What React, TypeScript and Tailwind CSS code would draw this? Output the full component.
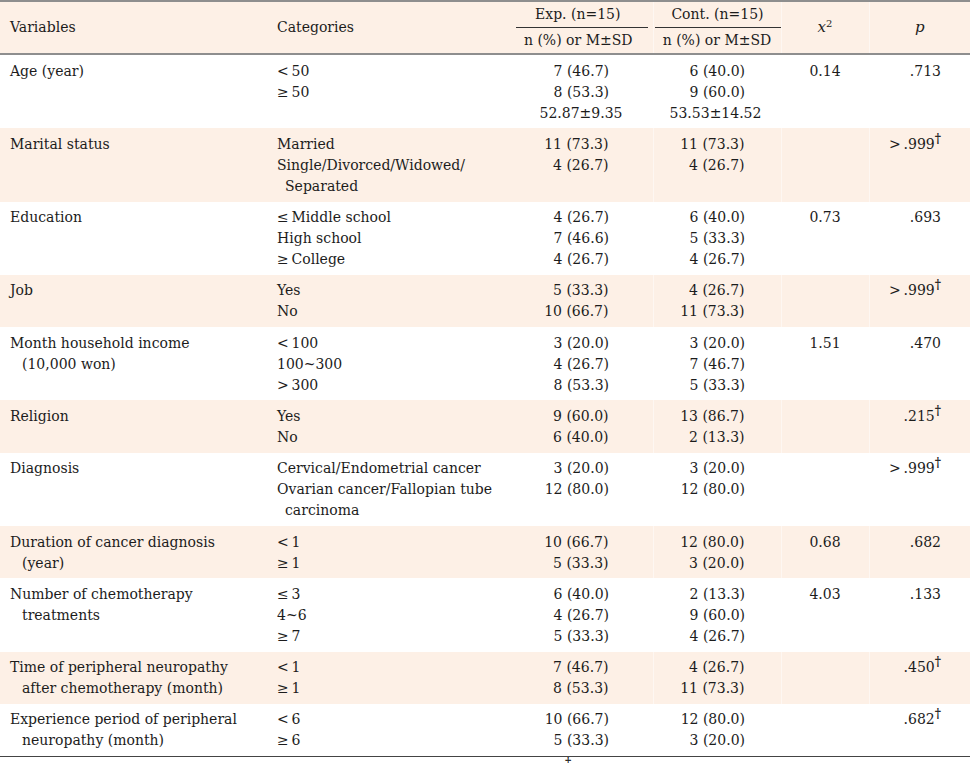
type Row = {
  v: string[];
  c: string[];
  e: string[];
  k: string[];
  x?: string;
  p?: string;
  dag?: boolean;
  shade?: boolean;
};

const T = "\u2009";

const rows: Row[] = [
  {
    v: ["Age (year)"],
    c: [`<${T}50`, `≥${T}50`],
    e: ["7 (46.7)", "8 (53.3)", "52.87±9.35"],
    k: ["6 (40.0)", "9 (60.0)", "53.53±14.52"],
    x: "0.14",
    p: ".713",
  },
  {
    v: ["Marital status"],
    c: ["Married", "Single/Divorced/Widowed/", "Separated"],
    e: ["11 (73.3)", "4 (26.7)"],
    k: ["11 (73.3)", "4 (26.7)"],
    p: `>${T}.999`,
    dag: true,
    shade: true,
  },
  {
    v: ["Education"],
    c: [`≤${T}Middle school`, "High school", `≥${T}College`],
    e: ["4 (26.7)", "7 (46.6)", "4 (26.7)"],
    k: ["6 (40.0)", "5 (33.3)", "4 (26.7)"],
    x: "0.73",
    p: ".693",
  },
  {
    v: ["Job"],
    c: ["Yes", "No"],
    e: ["5 (33.3)", "10 (66.7)"],
    k: ["4 (26.7)", "11 (73.3)"],
    p: `>${T}.999`,
    dag: true,
    shade: true,
  },
  {
    v: ["Month household income", "(10,000 won)"],
    c: [`<${T}100`, "100~300", `>${T}300`],
    e: ["3 (20.0)", "4 (26.7)", "8 (53.3)"],
    k: ["3 (20.0)", "7 (46.7)", "5 (33.3)"],
    x: "1.51",
    p: ".470",
  },
  {
    v: ["Religion"],
    c: ["Yes", "No"],
    e: ["9 (60.0)", "6 (40.0)"],
    k: ["13 (86.7)", "2 (13.3)"],
    p: ".215",
    dag: true,
    shade: true,
  },
  {
    v: ["Diagnosis"],
    c: ["Cervical/Endometrial cancer", "Ovarian cancer/Fallopian tube", "carcinoma"],
    e: ["3 (20.0)", "12 (80.0)"],
    k: ["3 (20.0)", "12 (80.0)"],
    p: `>${T}.999`,
    dag: true,
  },
  {
    v: ["Duration of cancer diagnosis", "(year)"],
    c: [`<${T}1`, `≥${T}1`],
    e: ["10 (66.7)", "5 (33.3)"],
    k: ["12 (80.0)", "3 (20.0)"],
    x: "0.68",
    p: ".682",
    shade: true,
  },
  {
    v: ["Number of chemotherapy", "treatments"],
    c: [`≤${T}3`, "4~6", `≥${T}7`],
    e: ["6 (40.0)", "4 (26.7)", "5 (33.3)"],
    k: ["2 (13.3)", "9 (60.0)", "4 (26.7)"],
    x: "4.03",
    p: ".133",
  },
  {
    v: ["Time of peripheral neuropathy", "after chemotherapy (month)"],
    c: [`<${T}1`, `≥${T}1`],
    e: ["7 (46.7)", "8 (53.3)"],
    k: ["4 (26.7)", "11 (73.3)"],
    p: ".450",
    dag: true,
    shade: true,
  },
  {
    v: ["Experience period of peripheral", "neuropathy (month)"],
    c: [`<${T}6`, `≥${T}6`],
    e: ["10 (66.7)", "5 (33.3)"],
    k: ["12 (80.0)", "3 (20.0)"],
    p: ".682",
    dag: true,
  },
];

function Nums({ lines, pr }: { lines: string[]; pr: string }) {
  return (
    <>
      {lines.map((l, i) =>
        l.includes("±") ? (
          <div key={i} className="text-center pr-[3px]">
            {l}
          </div>
        ) : (
          <div key={i} className={`text-right ${pr}`}>
            {l}
          </div>
        )
      )}
    </>
  );
}

const cell = "align-top pt-[5.5px] pb-[4.8px]";
const sep = "border-l border-[#fef7f2]";

export default function App() {
  return (
    <div className="w-[970px] bg-white text-[#1c1c1c] font-['DejaVu_Serif',serif] text-[14px] leading-[21px]">
      <table className="w-[970px] table-fixed border-collapse">
        <colgroup>
          <col className="w-[277px]" />
          <col className="w-[235px]" />
          <col className="w-[141px]" />
          <col className="w-[128px]" />
          <col className="w-[88px]" />
          <col className="w-[101px]" />
        </colgroup>
        <thead className="bg-[#fdf0e6]">
          <tr className="border-t-2 border-[#8e8e8e]">
            <th rowSpan={2} className="text-left font-normal pl-[10px] align-middle">
              Variables
            </th>
            <th rowSpan={2} className="text-left font-normal align-middle">
              Categories
            </th>
            <th className="p-0 font-normal">
              <div className="h-[26px] ml-[4px] mr-[5px] flex items-center justify-center border-b border-[#333] pr-[8px]">
                Exp. (n=15)
              </div>
            </th>
            <th className={`p-0 font-normal ${sep}`}>
              <div className="h-[26px] ml-[1px] flex items-center justify-center border-b border-[#333]">
                Cont. (n=15)
              </div>
            </th>
            <th rowSpan={2} className={`font-normal align-middle text-[15px] ${sep}`}>
              <i>x</i>
              <sup className="text-[10px]">2</sup>
            </th>
            <th rowSpan={2} className={`font-normal align-middle text-[15px] ${sep}`}>
              <i>p</i>
            </th>
          </tr>
          <tr className="border-b-2 border-[#8e8e8e]">
            <th className="h-[26px] font-normal pr-[8px]">n (%) or M±SD</th>
            <th className={`h-[26px] font-normal ${sep}`}>n (%) or M±SD</th>
          </tr>
        </thead>
        <tbody>
          {rows.map((r, i) => (
            <tr key={i} className={r.shade ? "bg-[#fdf0e6]" : "bg-white"}>
              <td className={`${cell} pl-[10px]`}>
                {r.v.map((l, j) => (
                  <div key={j} className={j > 0 ? "pl-[12px]" : ""}>
                    {l}
                  </div>
                ))}
              </td>
              <td className={cell}>
                {r.c.map((l, j) => (
                  <div
                    key={j}
                    className={j > 0 && (l === "Separated" || l === "carcinoma") ? "pl-[8px] whitespace-nowrap" : "whitespace-nowrap"}
                  >
                    {l}
                  </div>
                ))}
              </td>
              <td className={cell}>
                <Nums lines={r.e} pr="pr-[44px]" />
              </td>
              <td className={`${cell} ${r.shade ? sep : ""}`}>
                <Nums lines={r.k} pr="pr-[36px]" />
              </td>
              <td className={`${cell} text-center ${r.shade ? sep : ""}`}>{r.x}</td>
              <td className={`${cell} text-right pr-[29px] ${r.shade ? sep : ""}`}>
                {r.p}
                {r.dag && <sup className="text-[12px] font-bold">†</sup>}
              </td>
            </tr>
          ))}
        </tbody>
      </table>
      <div className="border-t border-[#444] pl-[565px] text-[12px] leading-[12px] font-bold">†</div>
    </div>
  );
}
